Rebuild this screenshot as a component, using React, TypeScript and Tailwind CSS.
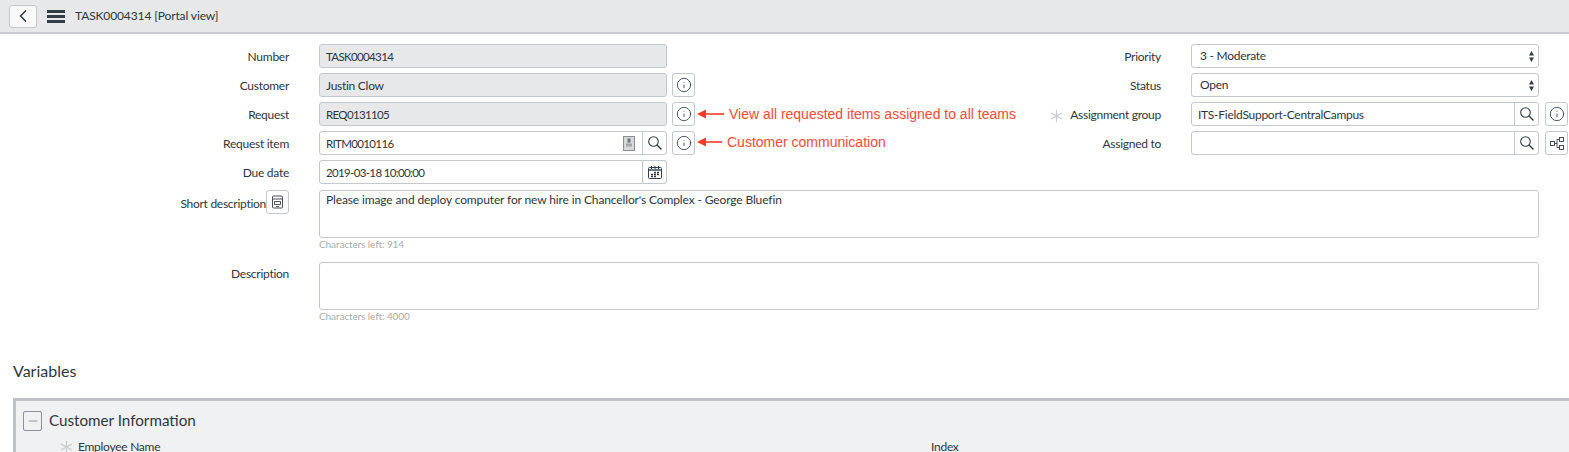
import React from 'react'
import { ChevronLeft, Info, Minus } from 'lucide-react'

const font = { fontFamily: '"Lato", "Noto Sans", sans-serif' }

const inputBase = 'flex h-6 items-center rounded-[3px] border border-[#c4c7cb] text-[#2e3640]'
const textSm = 'text-[12px] tracking-[-0.27px]'
const codeText = 'text-[11.5px] tracking-[-0.65px]'

const IconBtn = ({ children }: { children: React.ReactNode }) => (
  <div className="flex h-6 w-[23px] shrink-0 items-center justify-center rounded-[3px] border border-[#c4c7cb] bg-white text-[#343d47]">
    {children}
  </div>
)

const InfoBtn = () => (
  <IconBtn>
    <Info size={16} strokeWidth={1.3} />
  </IconBtn>
)

const Star = ({ className }: { className: string }) => (
  <svg width="13" height="12" viewBox="0 0 13 12" stroke="#c8cacd" strokeWidth="1.2" className={className}>
    <path d="M6.5 0v12M1 3l11 6M12 3L1 9" />
  </svg>
)

const Label = ({ text, required }: { text: string; required?: boolean }) => (
  <div className={`flex h-6 items-center justify-end pt-[2px] text-[#2e3640] ${textSm}`}>
    {required && <Star className="mr-[7px] translate-y-[1px]" />}
    {text}
  </div>
)

const SearchBox = ({ value, extra, code }: { value?: string; extra?: React.ReactNode; code?: boolean }) => (
  <div className={`${inputBase} w-[348px] bg-white pl-[6px]`}>
    <span className={`flex-1 truncate pt-[2px] ${code ? codeText : textSm}`}>{value}</span>
    {extra}
    <div className="flex h-full w-6 items-center justify-center border-l border-[#c4c7cb]">
      <svg width="14" height="14" viewBox="0 0 14 14" fill="none" stroke="#343d47" strokeWidth="1.1">
        <circle cx="5.5" cy="5.5" r="4.8" />
        <path d="M9 9l4.5 4.5" strokeWidth="1.4" />
      </svg>
    </div>
  </div>
)

const Note = ({ text, arrow, textLeft, up }: { text: string; arrow: number; textLeft: string; up?: string }) => (
  <div className={`absolute left-[25px] top-0 flex h-full items-center whitespace-nowrap ${up ?? ''}`}>
    <svg width={arrow} height="10" viewBox={`0 0 ${arrow} 10`} className="shrink-0">
      <path d={`M${arrow} 5H6`} stroke="#fb3a2a" strokeWidth="1.6" />
      <path d="M0 5l9-4.5v9z" fill="#fb3a2a" />
    </svg>
    <span className={`text-[14px] text-[#fb4a38] ${textLeft}`} style={{ fontFamily: '"Liberation Sans", sans-serif' }}>
      {text}
    </span>
  </div>
)

const SelectBox = ({ value }: { value: string }) => (
  <div className={`${inputBase} w-[348px] justify-between bg-white pl-[8px] pr-[4px]`}>
    <span className={textSm}>{value}</span>
    <svg width="5" height="11" viewBox="0 0 5 11" className="text-[#343d47]">
      <path d="M0 4.5L2.5 0 5 4.5zM0 6.5L2.5 11 5 6.5z" fill="currentColor" />
    </svg>
  </div>
)

const ReadOnly = ({ value, code }: { value: string; code?: boolean }) => (
  <div className={`${inputBase} w-[348px] bg-[#e6e8ea] pl-[6px] pt-[2px] ${code ? codeText : textSm}`}>{value}</div>
)

export default function App() {
  return (
    <div className="h-[452px] w-full overflow-hidden bg-white" style={font}>
      <header className="flex h-[34px] items-center border-b-2 border-[#c9ccd1] bg-[#e6e8ea] pl-[9px]">
        <div className="flex h-[23px] w-[28px] items-center justify-center rounded-[3px] border border-[#c4c7cb] bg-[#f8f9f9] text-[#343d47]">
          <ChevronLeft size={20} strokeWidth={2} />
        </div>
        <div className="ml-[10px] flex w-[18px] flex-col gap-[2px]">
          <div className="h-[3px] bg-[#343d47]" />
          <div className="h-[3px] bg-[#343d47]" />
          <div className="h-[3px] bg-[#343d47]" />
        </div>
        <span className="ml-[10px] text-[12px] tracking-[-0.12px] text-[#2e3640]">TASK0004314 [Portal view]</span>
      </header>

      <div className="flex items-start pt-[10px]">
        <div className="grid w-[700px] shrink-0 grid-cols-[289px_auto_1fr] gap-x-[30px] gap-y-[5px]">
          <Label text="Number" />
          <ReadOnly value="TASK0004314" code />
          <div />

          <Label text="Customer" />
          <ReadOnly value="Justin Clow" />
          <div className="-ml-[25px]"><InfoBtn /></div>

          <Label text="Request" />
          <ReadOnly value="REQ0131105" code />
          <div className="relative -ml-[25px]">
            <InfoBtn />
            <Note text="View all requested items assigned to all teams" arrow={27} textLeft="ml-[5px]" />
          </div>

          <Label text="Request item" />
          <SearchBox
            code
            value="RITM0010116"
            extra={
              <svg width="12" height="15" viewBox="0 0 12 15" className="mr-[7px]">
                <rect x="0.5" y="0.5" width="11" height="14" fill="#d6d8da" stroke="#8a8f95" />
                <rect x="4.5" y="2.5" width="3" height="4" fill="#6f757b" />
                <rect x="3" y="7.5" width="6" height="3" fill="#a4a8ac" />
              </svg>
            }
          />
          <div className="relative -ml-[25px]">
            <InfoBtn />
            <Note text="Customer communication" arrow={25} textLeft="ml-[5px]" up="-translate-y-[1px]" />
          </div>

          <Label text="Due date" />
          <div className={`${inputBase} w-[348px] bg-white pl-[6px]`}>
            <span className={`flex-1 pt-[2px] ${codeText}`}>2019-03-18 10:00:00</span>
            <div className="flex h-full w-6 items-center justify-center border-l border-[#c4c7cb]">
              <svg width="14" height="13" viewBox="0 0 14 13" fill="none" stroke="#343d47">
                <rect x="0.5" y="1.5" width="13" height="11" rx="1" />
                <path d="M3.5 0v3M7 0v3M10.5 0v3" />
                <path d="M1 4h12" strokeWidth="1.4" />
                <path d="M6 6.5h2M9 6.5h2M3 8.5h2M6 8.5h2M9 8.5h2M3 10.5h2M6 10.5h2" strokeWidth="1.5" />
              </svg>
            </div>
          </div>
          <div />
        </div>

        <div className="grid flex-1 grid-cols-[461px_auto_1fr] gap-x-[30px] gap-y-[5px]">
          <Label text="Priority" />
          <SelectBox value="3 - Moderate" />
          <div />

          <Label text="Status" />
          <SelectBox value="Open" />
          <div />

          <Label text="Assignment group" required />
          <SearchBox value="ITS-FieldSupport-CentralCampus" />
          <div className="-ml-6"><InfoBtn /></div>

          <Label text="Assigned to" />
          <SearchBox />
          <div className="-ml-6">
            <IconBtn>
              <svg width="14" height="13" viewBox="0 0 14 13" fill="none" stroke="#343d47" strokeWidth="0.9">
                <rect x="0.5" y="4.5" width="4" height="4" />
                <rect x="9.5" y="0.5" width="4" height="4" />
                <rect x="9.5" y="8.5" width="4" height="4" />
                <path d="M4.5 6.5H7M7 2.5V10.5M7 2.5H9.5M7 10.5H9.5" />
              </svg>
            </IconBtn>
          </div>
        </div>
      </div>

      <div className="mt-[6px] grid grid-cols-[289px_1220px] gap-x-[30px]">
        <div className="flex items-start justify-end">
          <span className={`mt-[5px] text-[#2e3640] ${textSm}`}>Short description</span>
          <IconBtn>
            <svg width="13" height="14" viewBox="0 0 13 14" fill="none" stroke="#343d47" strokeWidth="0.9">
              <rect x="1.5" y="1" width="10" height="12" rx="1" />
              <path d="M1.5 4h10M3.5 6.5h6v3h-6zM5 11.5h3" />
            </svg>
          </IconBtn>
        </div>
        <div>
          <div className="h-12 rounded-[3px] border border-[#c4c7cb] px-[6px] py-[1px] text-[12px] leading-[16px] tracking-[-0.13px] text-[#2e3640]">
            Please image and deploy computer for new hire in Chancellor's Complex - George Bluefin
          </div>
          <div className="text-[10px] leading-[12px] tracking-[-0.1px] text-[#a9acb0]">Characters left: 914</div>
        </div>
      </div>

      <div className="mt-[12px] grid grid-cols-[289px_1220px] gap-x-[30px]">
        <div className={`pt-[3px] text-right text-[#2e3640] ${textSm}`}>Description</div>
        <div>
          <div className="h-12 rounded-[3px] border border-[#c4c7cb]" />
          <div className="text-[10px] leading-[12px] tracking-[-0.1px] text-[#a9acb0]">Characters left: 4000</div>
        </div>
      </div>

      <h2 className="mt-[37px] pl-[13px] text-[16px] leading-[24px] text-[#2e3640]">Variables</h2>

      <div className="ml-[13px] mt-[15px] h-[60px] border-l-[3px] border-t-[3px] border-[#bfc3c7] bg-[#f0f1f3]">
        <div className="flex items-start pl-[7px] pt-[10px]">
          <div className="flex h-5 w-[19px] items-center justify-center rounded-[2px] border border-[#8c9197] text-[#6b7177]">
            <Minus size={14} strokeWidth={1.2} />
          </div>
          <span className="ml-[7px] text-[15.2px] leading-[19px] text-[#2e3640]">Customer Information</span>
        </div>
        <div className="mt-[8px] flex h-4 items-center text-[#2e3640]">
          <div className="flex w-[915px] items-center pl-[44px]">
            <Star className="mr-[5px]" />
            <span className={textSm}>Employee Name</span>
          </div>
          <span className={textSm}>Index</span>
        </div>
      </div>
    </div>
  )
}
